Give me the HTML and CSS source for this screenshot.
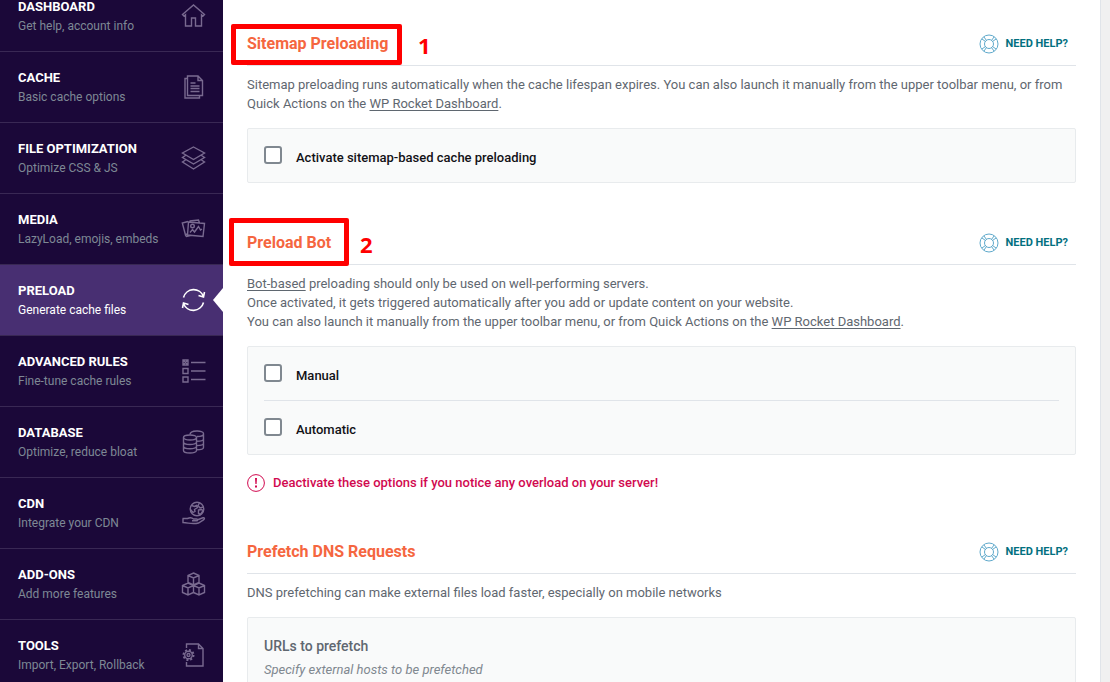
FILE: index.html
```html
<!DOCTYPE html>
<html lang="en">
<head>
<meta charset="utf-8">
<title>Preload settings</title>
<link rel="stylesheet" href="styles.css">
</head>
<body>
<div class="app">
  <nav class="sidebar">
    <a class="item" href="#dashboard"><span class="item-text"><b class="item-title">DASHBOARD</b><span class="item-sub">Get help, account info</span></span>
      <svg class="icon" viewBox="0 0 24 24"><path d="M1 10.500 12 1l11 9.500-1.500 1.500-1.500-1.200V22h-6v-8h-4v8H4V10.800L2.500 12z"/></svg></a>
    <a class="item" href="#cache"><span class="item-text"><b class="item-title">CACHE</b><span class="item-sub">Basic cache options</span></span>
      <svg class="icon" viewBox="0 0 24 24"><path d="M6 1h10.500L21 5.500v15H6zM16.500 1v4.500H21M6 3.500H3.500V23H18v-2.500M9 8h5M9 11h9M9 13.500h9M9 16.500h9"/></svg></a>
    <a class="item" href="#files"><span class="item-text"><b class="item-title">FILE OPTIMIZATION</b><span class="item-sub">Optimize CSS &amp; JS</span></span>
      <svg class="icon" viewBox="0 0 24 24"><path d="M12 1l11 6-11 6.500L1 7zM4 9.500 1 11.500l11 6.500 11-6.500-3-2M4 14l-3 2 11 7 11-7-3-2"/></svg></a>
    <a class="item" href="#media"><span class="item-text"><b class="item-title">MEDIA</b><span class="item-sub">LazyLoad, emojis, embeds</span></span>
      <svg class="icon" viewBox="0 0 24 24"><path d="M7 5l16 1.500-1.500 13-15.500-1.500zM6 16.500 4 18 .8 6 6.500 4.500M4 18l1 1.500 4-1M8 4l9-1 1 3M8.500 15.500l2.500-3 2 2.500 4-5.500 2 3.500 1.500-1"/><circle cx="11" cy="9" r="1.800"/></svg></a>
    <a class="item active" href="#preload" aria-current="page"><span class="item-text"><b class="item-title">PRELOAD</b><span class="item-sub">Generate cache files</span></span>
      <svg class="icon" viewBox="0 0 24 24"><path d="M2 9.500a10.500 10.500 0 0 1 20-1M23 4l-1 5-5-1.500M22 14.500a10.500 10.500 0 0 1-20 1M1 20l1-5 5 1.500"/></svg></a>
    <a class="item" href="#rules"><span class="item-text"><b class="item-title">ADVANCED RULES</b><span class="item-sub">Fine-tune cache rules</span></span>
      <svg class="icon" viewBox="0 0 24 24"><path d="M1.500 1h5v5h-5zM1.500 1l5 5M6.500 1l-5 5M1.500 9.500h5v5h-5zM1.500 18h5v5h-5zM9.500 3.500H24M9.500 12H24M9.500 20.500H24"/></svg></a>
    <a class="item" href="#database"><span class="item-text"><b class="item-title">DATABASE</b><span class="item-sub">Optimize, reduce bloat</span></span>
      <svg class="icon" viewBox="0 0 24 24"><ellipse cx="8.500" cy="7.500" rx="6.500" ry="2.500"/><path d="M2 7.500v13c0 3.300 13 3.300 13 0v-13M2 12c0 3.300 13 3.300 13 0M2 16.200c0 3.300 13 3.300 13 0M8.500 4.500c0-4.500 13.500-4.500 13.500-1v14c0 1.500-2.500 2.300-7 2.300M22 4c0 2-3 2.500-6.500 2.500M22 9c0 1.500-2.500 2.300-7 2.300M22 13.300c0 1.500-2.500 2.300-7 2.300"/></svg></a>
    <a class="item" href="#cdn"><span class="item-text"><b class="item-title">CDN</b><span class="item-sub">Integrate your CDN</span></span>
      <svg class="icon" viewBox="0 0 24 24"><circle cx="15.500" cy="8" r="6.800"/><path d="M10 4.500l3 1 2-1 1 2-3 2 .5 2-2 1-2.500-3M18 2l-1.500 2.500 2 2.500 3.500-1M17 9l3-.5 1.500 1-2.500 4-2-1zM1 17.500h5c3-1.500 5-.5 6 .5h3c1.500 0 1.500 1.800 0 1.800h-4.500M15.500 19l6-2.200c1.500-.3 2 1 .5 2l-5 3.200c-6 1.500-9 0-15.500-.5v-4"/></svg></a>
    <a class="item" href="#addons"><span class="item-text"><b class="item-title">ADD-ONS</b><span class="item-sub">Add more features</span></span>
      <svg class="icon" viewBox="0 0 24 24"><path d="M12 1l5.500 2.500v7L12 13 6.500 10.500v-7zM6.500 3.500 12 6l5.500-2.500M12 6v7M6.500 11l5.500 2.500v7L6.500 23 1 20.500v-7zM1 13.500 6.500 16l5.500-2.500M6.500 16v7M17.500 11l5.500 2.500v7L17.500 23 12 20.500M12 13.500l5.500 2.500 5.500-2.500M17.500 16v7M12 13.500l5.500-2.500"/></svg></a>
    <a class="item" href="#tools"><span class="item-text"><b class="item-title">TOOLS</b><span class="item-sub">Import, Export, Rollback</span></span>
      <svg class="icon" viewBox="0 0 24 24"><path d="M5 5V1h12l4.500 4.500V23H5v-4M17 1v4.500h4.500"/><circle cx="7" cy="12" r="1.500"/><circle cx="7" cy="12" r="3.800"/><circle class="teeth" cx="7" cy="12" r="5"/></svg></a>
  </nav>

  <main class="content">
    <section class="section">
      <header class="head">
        <h2 class="title">Sitemap Preloading</h2>
        <span class="mark mark-one"></span><span class="step step-one">1</span>
        <button class="help" type="button"><svg class="ring" viewBox="0 0 20 20"><circle cx="10" cy="10" r="9"/><circle cx="10" cy="10" r="4.500"/><path d="M3 5l3.500 2.500M5 3l2.500 3.500M17 5l-3.500 2.500M15 3l-2.500 3.500M3 15l3.500-2.500M5 17l2.500-3.500M17 15l-3.500-2.500M15 17l-2.500-3.500"/></svg>NEED HELP?</button>
      </header>
      <p class="desc">Sitemap preloading runs automatically when the cache lifespan expires. You can also launch it manually from the upper toolbar menu, or from Quick Actions on the <a href="#dashboard">WP Rocket Dashboard</a>.</p>
      <div class="panel">
        <label class="option"><input class="check" type="checkbox"><span class="option-text">Activate sitemap-based cache preloading</span></label>
      </div>
    </section>

    <section class="section">
      <header class="head">
        <h2 class="title">Preload Bot</h2>
        <span class="mark mark-two"></span><span class="step step-two">2</span>
        <button class="help" type="button"><svg class="ring" viewBox="0 0 20 20"><circle cx="10" cy="10" r="9"/><circle cx="10" cy="10" r="4.500"/><path d="M3 5l3.500 2.500M5 3l2.500 3.500M17 5l-3.500 2.500M15 3l-2.500 3.500M3 15l3.500-2.500M5 17l2.500-3.500M17 15l-3.500-2.500M15 17l-2.500-3.500"/></svg>NEED HELP?</button>
      </header>
      <p class="desc"><a href="#bot">Bot-based</a> preloading should only be used on well-performing servers.<br>Once activated, it gets triggered automatically after you add or update content on your website.<br>You can also launch it manually from the upper toolbar menu, or from Quick Actions on the <a href="#dashboard">WP Rocket Dashboard</a>.</p>
      <div class="panel">
        <label class="option"><input class="check" type="checkbox"><span class="option-text">Manual</span></label>
        <label class="option"><input class="check" type="checkbox"><span class="option-text">Automatic</span></label>
      </div>
      <p class="warning"><svg class="alert" viewBox="0 0 18 18"><circle cx="9" cy="9" r="8.400"/><path d="M8 4h2l-.4 6H8.400zM8 11.500h2v2H8z"/></svg>Deactivate these options if you notice any overload on your server!</p>
    </section>

    <section class="section">
      <header class="head">
        <h2 class="title">Prefetch DNS Requests</h2>
        <button class="help" type="button"><svg class="ring" viewBox="0 0 20 20"><circle cx="10" cy="10" r="9"/><circle cx="10" cy="10" r="4.500"/><path d="M3 5l3.500 2.500M5 3l2.500 3.500M17 5l-3.500 2.500M15 3l-2.500 3.500M3 15l3.500-2.500M5 17l2.500-3.500M17 15l-3.500-2.500M15 17l-2.500-3.500"/></svg>NEED HELP?</button>
      </header>
      <p class="desc">DNS prefetching can make external files load faster, especially on mobile networks</p>
      <div class="panel field">
        <h3 class="field-title">URLs to prefetch</h3>
        <p class="field-note">Specify external hosts to be prefetched</p>
      </div>
    </section>
  </main>
</div>
</body>
</html>
```
FILE: styles.css
```css
* { box-sizing: border-box; }
body {
  margin: 0;
  background: #f0f0f0;
  color: #5f6770;
  font: 13px/19px Roboto, "Open Sans", sans-serif;
}
h2, h3, p { margin: 0; }
a { color: inherit; text-underline-offset: 2px; }

.app { display: flex; height: 100vh; padding-right: 9px; overflow: hidden; }

/* Sidebar, scrolled slightly past its top */
.sidebar { flex: none; width: 223px; min-height: 110vh; margin-top: -19px; background: #1b0839; }
.item {
  position: relative;
  display: flex;
  align-items: center;
  justify-content: space-between;
  padding: 16px 17px 16px 18px;
  border-bottom: 1px solid #392854;
  color: #7e8895;
  text-decoration: none;
}
.item-text { display: flex; flex-direction: column; }
.item-title { color: #fff; font-size: 13px; line-height: 20px; }
.item-sub { font-size: 12px; line-height: 18px; }
.icon { width: 25px; height: 24px; fill: none; stroke: #796a90; stroke-width: 1.4; }
.teeth { stroke-width: 2; stroke-dasharray: 2 1.9; }
.active { background: #482f72; color: #fff; }
.active .icon { stroke: #fff; stroke-width: 1.6; }
.active::after {
  content: "";
  position: absolute;
  right: 0;
  top: calc(50% - 12px);
  border: solid transparent;
  border-width: 12px 10px 12px 0;
  border-right-color: #fff;
}

.content { flex: 1; min-width: 0; padding: 24px; border-right: 1px solid #e0e4e9; background: #fff; }
.section { margin-bottom: 40px; }
.head {
  position: relative;
  display: flex;
  align-items: center;
  justify-content: space-between;
  height: 42px;
  margin-bottom: 9px;
  padding: 0 8px 2px 0;
  border-bottom: 1px solid #e0e4e9;
}
.title { color: #f56640; font-size: 16px; line-height: 20px; }
.help {
  display: flex;
  align-items: center;
  gap: 7px;
  padding: 0;
  border: 0;
  background: none;
  color: #02707f;
  font: bold 11px/18px Roboto, "Open Sans", sans-serif;
}
.ring { width: 20px; height: 20px; fill: none; stroke: #5fa9cb; stroke-width: 1; }

/* Numbered call-outs drawn over the headings */
.mark { position: absolute; border: 5px solid #f00; border-radius: 2px; }
.mark-one { left: -16px; top: 0; width: 171px; height: 41px; }
.mark-two { left: -18px; top: -5px; width: 120px; height: 48px; }
.step { position: absolute; top: 6px; color: #f00; font: bold 22px/30px "Noto Sans", "Open Sans", sans-serif; }
.step-one { left: 171px; }
.step-two { left: 113px; }

.panel { margin-top: 15px; padding: 0 16px; border: 1px solid #e8ebed; border-radius: 2px; background: #f9fafa; }
.option { display: flex; align-items: center; gap: 14px; height: 53px; padding-bottom: 1px; color: #121116; font-weight: 500; }
.option + .option { height: 54px; border-top: 1px solid #e0e4e9; }
.option-text { padding-top: 4px; }
.check { appearance: none; width: 18px; height: 18px; margin: 0; border: 2px solid #808890; border-radius: 3px; background: #fff; }

.warning { display: flex; align-items: center; gap: 8px; margin-top: 19px; color: #d1094f; line-height: 18px; font-weight: 500; }
.alert { width: 18px; height: 18px; fill: none; stroke: #d1094f; }
.alert path { fill: #d1094f; stroke: none; }

.field { padding-top: 18px; padding-bottom: 18px; }
.field-title { font-size: 14px; line-height: 20px; font-weight: 500; }
.field-note { margin-top: 4px; color: #808890; font-style: italic; }
```
